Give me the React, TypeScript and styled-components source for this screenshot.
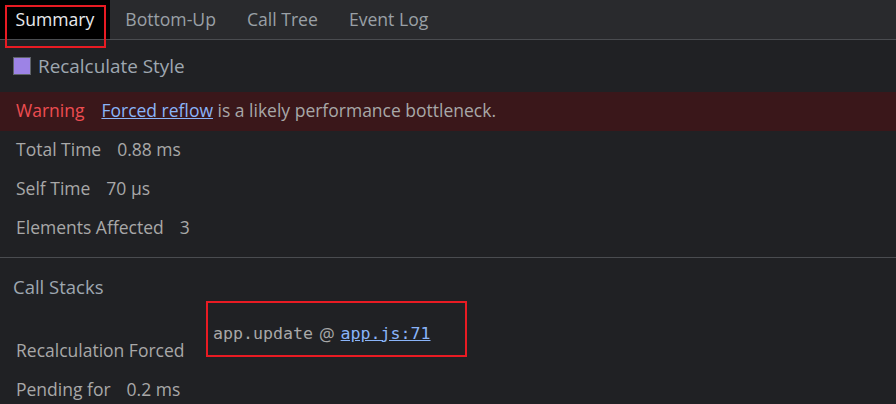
import React from "react";
import styled, { createGlobalStyle } from "styled-components";

const Global = createGlobalStyle`
  html, body { margin: 0; padding: 0; background: #202124; }
  body { font-family: "Open Sans", "Noto Sans", sans-serif; }
  * { box-sizing: border-box; }
`;

const Page = styled.div`
  width: 896px;
  height: 404px;
  overflow: hidden;
  background: #202124;
  color: #a8a8a8;
  font-size: 17.5px;
`;

const TabBar = styled.div`
  display: flex;
  height: 40px;
  background: #292a2d;
  border-bottom: 1px solid #4a4c50;
`;

const Tab = styled.div<{ $active?: boolean }>`
  position: relative;
  display: flex;
  align-items: center;
  padding: 0 15.5px 2px;
  height: 39px;
  background: ${(p) => (p.$active ? "#000" : "transparent")};
  color: ${(p) => (p.$active ? "#e8eaed" : "#9aa0a6")};
  font-size: 17.6px;
`;

const Highlight = styled.div`
  position: absolute;
  border: 2px solid #e81b23;
  pointer-events: none;
`;

const TitleRow = styled.div`
  display: flex;
  align-items: center;
  gap: 7px;
  height: 52px;
  padding: 0 13px 1px;
  color: #9ea7b0;
  font-size: 18.9px;
`;

const Swatch = styled.span`
  width: 18px;
  height: 18px;
  background: #9d83e6;
  border: 1px solid #5f6368;
`;

const Warning = styled.div`
  display: flex;
  align-items: center;
  gap: 17px;
  height: 39px;
  padding: 0 16px 4px;
  background: #3a171a;
  color: #a8a8a8;
`;

const WarnLabel = styled.span`
  color: #ee4d51;
`;

const Link = styled.a`
  color: #8ab4f8;
  text-decoration: underline;
  cursor: pointer;
`;

const Row = styled.div<{ $pad?: string }>`
  display: flex;
  align-items: center;
  gap: 16px;
  height: 39px;
  padding: ${(p) => p.$pad ?? "0 16px 4px"};
`;

const Divider = styled.div`
  margin-top: 9px;
  border-top: 1px solid #4a4c50;
`;

const SectionTitle = styled.div`
  display: flex;
  align-items: center;
  height: 43px;
  padding: 13px 13px 0;
  color: #9ea7b0;
  font-size: 18.5px;
`;

const StackRow = styled.div`
  display: flex;
  align-items: flex-start;
  padding: 0 16px;
  height: 67px;
`;

const StackLabel = styled.span`
  align-self: flex-end;
  line-height: 24px;
  margin-bottom: 6px;
  width: 190px;
`;

const StackBox = styled.div`
  position: relative;
  display: flex;
  align-items: center;
  gap: 6px;
  width: 261px;
  padding: 9px 7px 0;
  height: 56px;
  font-family: "DejaVu Sans Mono", "Liberation Mono", monospace;
  font-size: 16.6px;
  color: #a8a8a8;
`;

const At = styled.span`
  font-family: "Open Sans", sans-serif;
  font-size: 17.5px;
`;

const Rows = [
  ["Total Time", "0.88 ms"],
  ["Self Time", "70 µs"],
  ["Elements Affected", "3"],
];

export default function App() {
  return (
    <Page>
      <Global />
      <TabBar>
        <Tab $active>
          Summary
          <Highlight style={{ left: 5, top: 5, width: 101, height: 43 }} />
        </Tab>
        <Tab>Bottom-Up</Tab>
        <Tab>Call Tree</Tab>
        <Tab>Event Log</Tab>
      </TabBar>
      <TitleRow>
        <Swatch />
        Recalculate Style
      </TitleRow>
      <Warning>
        <WarnLabel>Warning</WarnLabel>
        <span>
          <Link>Forced reflow</Link> is a likely performance bottleneck.
        </span>
      </Warning>
      {Rows.map(([k, v]) => (
        <Row key={k}>
          <span>{k}</span>
          <span>{v}</span>
        </Row>
      ))}
      <Divider />
      <SectionTitle>Call Stacks</SectionTitle>
      <StackRow>
        <StackLabel>Recalculation Forced</StackLabel>
        <StackBox>
          <span>app.update</span>
          <At>@</At>
          <Link>app.js:71</Link>
          <Highlight style={{ left: 0, top: 0, right: 0, bottom: 0 }} />
        </StackBox>
      </StackRow>
      <Row $pad="3px 16px 0">
        <span>Pending for</span>
        <span>0.2 ms</span>
      </Row>
    </Page>
  );
}
